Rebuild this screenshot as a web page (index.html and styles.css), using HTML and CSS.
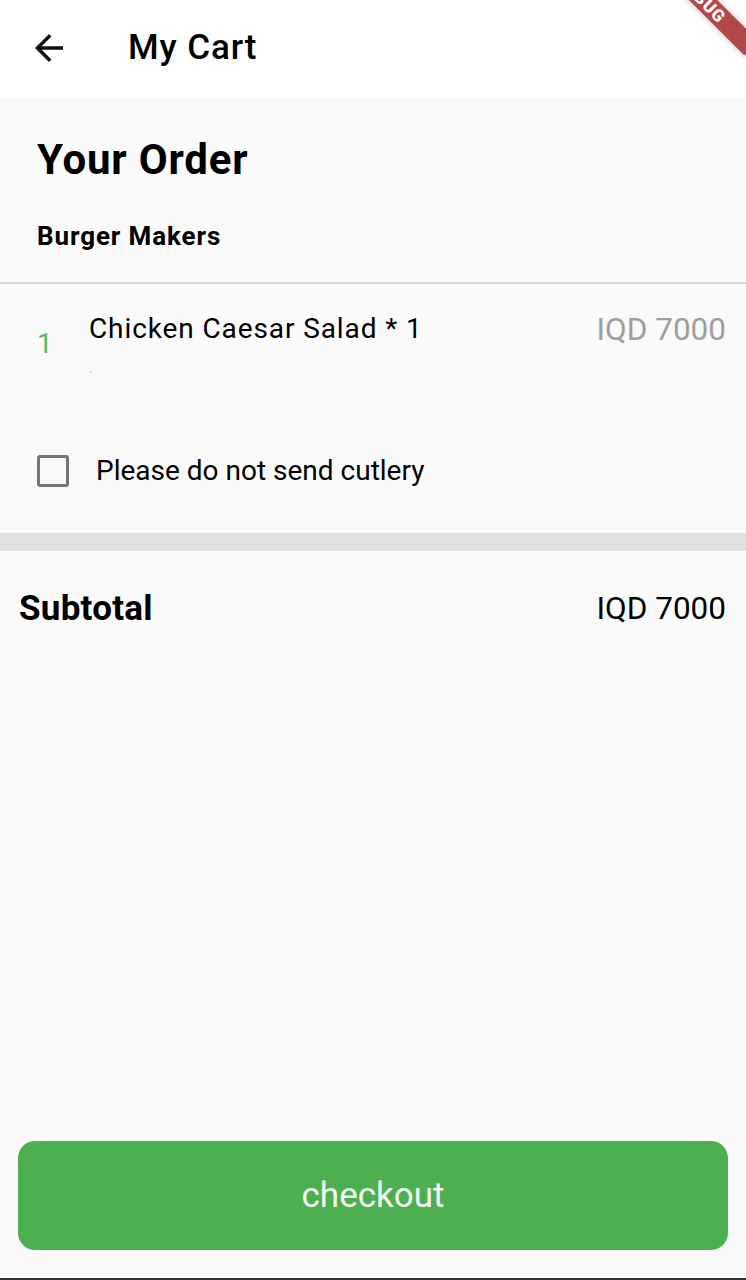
FILE: index.html
```html
<!DOCTYPE html>
<html lang="en">
<head>
<meta charset="utf-8">
<title>My Cart</title>
<link rel="stylesheet" href="styles.css">
</head>
<body>
<div class="screen">
  <header class="appbar">
    <div class="leading">
      <svg class="back-icon" viewBox="0 0 24 24" width="42" height="42" aria-hidden="true">
        <path d="M20 11H7.83l5.59-5.59L12 4l-8 8 8 8 1.41-1.41L7.83 13H20v-2z" fill="#111"/>
      </svg>
    </div>
    <h1 class="appbar-title">My Cart</h1>
  </header>

  <main class="content">
    <h2 class="order-title">Your Order</h2>
    <div class="restaurant">Burger Makers</div>
    <div class="divider"></div>

    <div class="item-row">
      <div class="item-qty">1</div>
      <div class="item-info">
        <div class="item-name">Chicken Caesar Salad * 1</div>
        <div class="item-note">.</div>
      </div>
      <div class="item-price">IQD 7000</div>
    </div>

    <label class="cutlery-row">
      <span class="checkbox"></span>
      <span class="cutlery-text">Please do not send cutlery</span>
    </label>

    <div class="section-bar"></div>

    <div class="subtotal-row">
      <div class="subtotal-label">Subtotal</div>
      <div class="subtotal-value">IQD 7000</div>
    </div>

    <div class="checkout-wrap">
      <button class="checkout-btn">checkout</button>
    </div>
  </main>

  <div class="bottom-line"></div>
  <div class="debug-banner">DEBUG</div>
</div>
</body>
</html>
```
FILE: styles.css
```css
* {
  box-sizing: border-box;
}

html, body {
  margin: 0;
  padding: 0;
}

body {
  background: #fafafa;
  font-family: Roboto, "Noto Sans", "Liberation Sans", sans-serif;
  color: #000;
}

.screen {
  position: relative;
  width: 746px;
  height: 1280px;
  overflow: hidden;
  display: flex;
  flex-direction: column;
  background: #fafafa;
}

/* App bar */
.appbar {
  height: 98px;
  flex: none;
  background: #fff;
  display: flex;
  align-items: center;
  padding-bottom: 3px;
}

.leading {
  width: 98px;
  display: flex;
  justify-content: center;
  align-items: center;
}

.back-icon {
  display: block;
}

.appbar-title {
  margin: 0 0 0 30px;
  font-size: 35px;
  line-height: 42px;
  font-weight: 500;
  letter-spacing: 0.9px;
  color: #000;
}

/* Content */
.content {
  flex: 1;
  display: flex;
  flex-direction: column;
}

.order-title {
  margin: 37px 0 0 37px;
  font-size: 42px;
  line-height: 50px;
  font-weight: 700;
  letter-spacing: 0.8px;
}

.restaurant {
  margin: 36px 0 0 37px;
  font-size: 26px;
  line-height: 30px;
  font-weight: 700;
  letter-spacing: 0.9px;
}

.divider {
  margin-top: 31px;
  height: 2px;
  background: #d9d9d9;
}

.item-row {
  display: flex;
  align-items: flex-start;
  padding: 28px 20px 0 37px;
}

.item-qty {
  width: 52px;
  margin-top: 15px;
  font-size: 28px;
  line-height: 34px;
  color: #5cb860;
}

.item-info {
  flex: 1;
  display: flex;
  flex-direction: column;
}

.item-name {
  font-size: 28px;
  line-height: 34px;
  letter-spacing: 0.9px;
}

.item-note {
  margin-top: 16px;
  font-size: 12px;
  line-height: 14px;
  color: #9e9e9e;
}

.item-price {
  margin-top: -1px;
  font-size: 31.5px;
  line-height: 38px;
  color: #9e9e9e;
}

.cutlery-row {
  display: flex;
  align-items: center;
  margin-top: 78px;
  padding-left: 37px;
  height: 34px;
}

.checkbox {
  width: 32px;
  height: 32px;
  border: 3px solid #757575;
  border-radius: 3px;
  flex: none;
}

.cutlery-text {
  margin-left: 27px;
  font-size: 28px;
  line-height: 34px;
}

.section-bar {
  margin-top: 45px;
  height: 18px;
  background: #e0e0e0;
}

.subtotal-row {
  display: flex;
  justify-content: space-between;
  align-items: center;
  padding: 37px 20px 0 19px;
}

.subtotal-label {
  font-size: 35px;
  line-height: 42px;
  font-weight: 700;
  letter-spacing: 0.25px;
}

.subtotal-value {
  font-size: 31.5px;
  line-height: 38px;
}

.checkout-wrap {
  margin-top: auto;
  padding: 0 18px 28px;
}

.checkout-btn {
  display: block;
  width: 100%;
  height: 109px;
  border: none;
  border-radius: 17px;
  background: #4caf50;
  color: #f3faf3;
  font-family: Roboto, "Noto Sans", "Liberation Sans", sans-serif;
  font-size: 35px;
  font-weight: 400;
  padding: 0;
}

.bottom-line {
  flex: none;
  height: 2px;
  background: #333;
}

/* Debug banner (overlay) */
.debug-banner {
  position: absolute;
  left: 632px;
  top: -11px;
  width: 140px;
  height: 20px;
  transform: rotate(45deg);
  background: #b3484b;
  box-shadow: 0 0 6px rgba(0, 0, 0, 0.25);
  color: #fff;
  font-size: 17px;
  line-height: 20px;
  font-weight: 900;
  letter-spacing: 1px;
  text-align: center;
}
```
